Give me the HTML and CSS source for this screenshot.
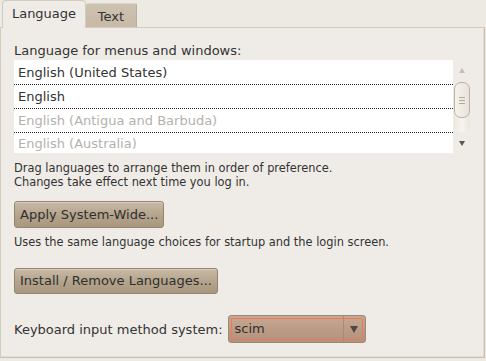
FILE: index.html
```html
<!DOCTYPE html>
<html>
<head>
<meta charset="utf-8">
<link rel="stylesheet" href="styles.css">
</head>
<body>
<div class="window">
  <div class="tabs">
    <div class="tab active">Language</div>
    <div class="tab">Text</div>
  </div>
  <div class="panel">
    <div class="label">Language for menus and windows:</div>
    <div class="list">
      <div class="rows">
        <div class="row first">English (United States)</div>
        <div class="row">English</div>
        <div class="row dim">English (Antigua and Barbuda)</div>
        <div class="row dim last">English (Australia)</div>
      </div>
      <div class="scrollbar">
        <div class="arrow up"></div>
        <div class="trough">
          <div class="thumb"><span class="grip"></span><span class="grip"></span><span class="grip"></span></div>
        </div>
        <div class="arrow down"></div>
      </div>
    </div>
    <div class="note note1">Drag languages to arrange them in order of preference.<br>Changes take effect next time you log in.</div>
    <div class="btn btn1">Apply System-Wide...</div>
    <div class="note note2">Uses the same language choices for startup and the login screen.</div>
    <div class="btn btn2">Install / Remove Languages...</div>
    <div class="kbd">
      <span class="kbd-label">Keyboard input method system:</span>
      <div class="combo">
        <span class="combo-text">scim</span>
        <span class="combo-arrow"></span>
      </div>
    </div>
  </div>
</div>
</body>
</html>
```

FILE: styles.css
```css
html, body {
  margin: 0;
  padding: 0;
  background: #edeae4;
}
.window {
  width: 486px;
  height: 361px;
  font-family: "DejaVu Sans", sans-serif;
  font-size: 13px;
  color: #333;
  background: #edeae4;
  overflow: hidden;
}
.tabs {
  display: flex;
  align-items: flex-end;
  height: 28px;
  padding-left: 2px;
  margin-bottom: -1px;
  position: relative;
  z-index: 1;
}
.tab {
  box-sizing: border-box;
  height: 24px;
  width: 51px;
  margin-bottom: 1px;
  background: linear-gradient(#cdc2b0, #c6baa6);
  border-top: 1px solid #ddd4c6;
  border-right: 1px solid #bcae98;
  border-radius: 2px 2px 0 0;
  display: flex;
  align-items: center;
  justify-content: center;
  padding-top: 1px;
}
.tab.active {
  height: 28px;
  width: 84px;
  margin-bottom: 0;
  background: #efece7;
  border: 1px solid #d3cbbd;
  border-bottom: none;
  border-radius: 4px 4px 0 0;
  padding-top: 0;
  padding-bottom: 2px;
}
.panel {
  box-sizing: border-box;
  width: 485px;
  height: 331px;
  background: #efece7;
  border: 1px solid #d3cbbd;
  border-right-color: #c9bfae;
  border-bottom-color: #c9bfae;
  box-shadow: inset -1px -1px 0 #e4ddd1;
  padding: 15px 0 0 13px;
}
.label {
  line-height: 16px;
  margin-bottom: 1px;
}
.list {
  display: flex;
  width: 456px;
  height: 93px;
}
.rows {
  flex: 1;
  background: #fff;
}
.row {
  box-sizing: border-box;
  height: 24px;
  line-height: 23px;
  padding-left: 4px;
  border-bottom: 1px dotted #222;
  white-space: nowrap;
}
.row.first {
  height: 25px;
  line-height: 25px;
}
.row.last {
  border-bottom: none;
  height: 20px;
  line-height: 22px;
}
.row.dim {
  color: #b4b1ac;
}
.scrollbar {
  width: 17px;
  display: flex;
  flex-direction: column;
  align-items: center;
}
.arrow {
  width: 0;
  height: 0;
  border-left: 3px solid transparent;
  border-right: 3px solid transparent;
}
.arrow.up {
  margin-top: 8px;
  border-bottom: 5px solid #c6beb2;
}
.arrow.down {
  margin-top: 9px;
  border-top: 5px solid #5a5751;
}
.trough {
  margin-top: 9px;
  width: 16px;
  height: 50px;
  border-radius: 7px;
  background: linear-gradient(to right, #ece8e0, #f6f4f0 50%, #ebe6de);
}
.thumb {
  box-sizing: border-box;
  height: 36px;
  border: 1px solid #bcb1a0;
  border-radius: 7px;
  background: linear-gradient(to right, #f5f2ed, #e9e4da);
  display: flex;
  flex-direction: column;
  align-items: center;
  justify-content: center;
  gap: 2px;
}
.grip {
  width: 6px;
  height: 1px;
  background: #b3a995;
}
.note {
  font-size: 11.4px;
  line-height: 14px;
}
.note1 {
  margin-top: 8px;
}
.btn {
  box-sizing: border-box;
  display: inline-flex;
  align-items: center;
  height: 27px;
  padding: 0 5px 1px 5px;
  border: 1px solid #95846e;
  border-radius: 3px;
  background: linear-gradient(#c8baa6, #b4a38b 55%, #a9977f);
  box-shadow: inset 0 1px 0 #d8cdbd;
  color: #2f2f2f;
}
.btn1 {
  margin-top: 12px;
}
.note2 {
  margin-top: 7px;
}
.btn2 {
  display: flex;
  width: fit-content;
  margin-top: 19px;
  height: 26px;
}
.kbd {
  display: flex;
  align-items: center;
  gap: 5px;
  margin-top: 21px;
}
.combo {
  box-sizing: border-box;
  width: 138px;
  height: 28px;
  border: 1px solid #9a8a76;
  border-radius: 3px;
  background: linear-gradient(#c6a792, #bb9b85 55%, #b3927c);
  position: relative;
  display: flex;
  align-items: center;
  color: #2f2f2f;
}
.combo::after {
  content: "";
  position: absolute;
  inset: 2px;
  border: 1px solid #ee7a5c;
  border-radius: 1px;
}
.combo-text {
  flex: 1;
  padding-left: 6px;
  padding-bottom: 1px;
}
.combo-arrow {
  width: 21px;
  height: 100%;
  border-left: 1px solid #a88a74;
  display: flex;
  align-items: center;
  justify-content: center;
}
.combo-arrow::before {
  content: "";
  width: 0;
  height: 0;
  border-left: 4px solid transparent;
  border-right: 4px solid transparent;
  border-top: 7px solid #4e4640;
}
```
